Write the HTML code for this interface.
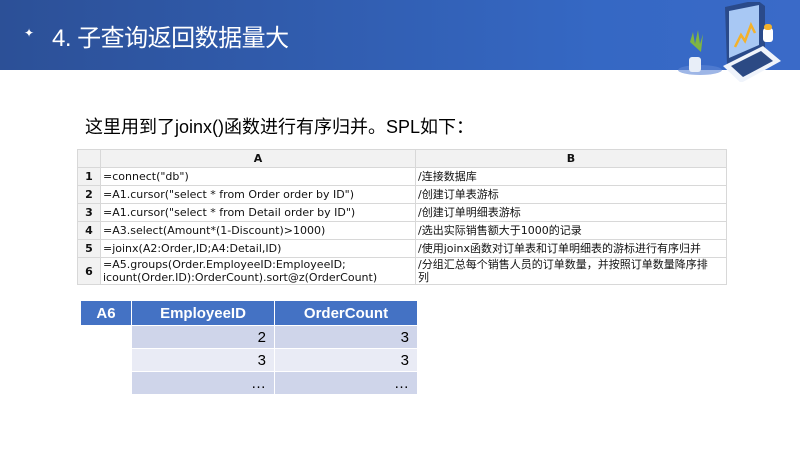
<!DOCTYPE html>
<html><head><meta charset="utf-8"><style>
body{margin:0;width:800px;height:450px;position:relative;background:#fff;font-family:"Liberation Sans","Noto Sans CJK SC",sans-serif;overflow:hidden}
.hd{position:absolute;left:0;top:0;width:800px;height:70px;background:linear-gradient(90deg,#2c5097 0%,#3568c4 75%,#3a6ac8 100%)}
.tt{position:absolute;left:52px;top:18px;color:#fff;font-size:24px;letter-spacing:-0.5px}
.star{position:absolute;left:24px;top:26px;color:#fff;font-size:12px}
.sub{position:absolute;left:85px;top:113px;font-size:18px;color:#000}
table{border-collapse:collapse;position:absolute}
.t1{left:77px;top:149px;font-size:11px;font-family:"DejaVu Sans","Noto Sans CJK SC",sans-serif}
.t1 td{border:1px solid #d8d8d8;padding:0 2px;height:17px;line-height:13px;color:#111;white-space:nowrap}
.t1 tr:first-child td{background:#f2f2f2;font-weight:bold;text-align:center}
.t1 td:first-child{background:#f2f2f2;font-weight:bold;text-align:center;width:18px}
.t2{left:80px;top:300px;font-size:15px}
.t2 td{border:1px solid #fff;height:22px;padding:0 8px}
.t2 .h td{background:#4472c4;color:#fff;font-weight:bold;text-align:center;height:24px}
.t2 .a td{background:#cfd5ea;text-align:right}
.t2 .b td{background:#e9ebf5;text-align:right}
.t2 td.e{background:#fff!important}
</style></head><body>
<div class="hd"></div>
<div class="star">✦</div>
<div class="tt">4. 子查询返回数据量大</div>
<svg style="position:absolute;left:665px;top:2px" width="120" height="80" viewBox="0 0 120 80">
<ellipse cx="35" cy="68" rx="22" ry="5" fill="#5d86d6" opacity=".6"/>
<path d="M25 40 l3-10 l2 12 l3-14 l2 14 l3-10 l-2 18z" fill="#7fb542"/>
<rect x="24" y="55" width="12" height="15" rx="3" fill="#e8eef8"/>
<path d="M60 5 l32-7 l8 6 l0 44 l-38 16z" fill="#2a4a8a"/>
<path d="M64 9 l30-6 l0 40 l-30 13z" fill="#a8c8f4"/>
<path d="M70 45 l6-12 l4 6 l6-16 l4 8" stroke="#f3b12b" stroke-width="2.5" fill="none"/>
<path d="M58 64 l40-20 l18 15 l-40 22z" fill="#f0f4fb"/>
<path d="M66 64 l30-15 l12 10 l-30 16z" fill="#2c4a84"/>
<rect x="98" y="26" width="10" height="14" rx="3" fill="#fff"/>
<rect x="99" y="22" width="8" height="6" rx="3" fill="#f3b12b"/>
</svg>
<div class="sub">这里用到了joinx()函数进行有序归并。SPL如下：</div>
<table class="t1">
<tr><td></td><td style="width:310px">A</td><td style="width:306px">B</td></tr>
<tr><td>1</td><td>=connect("db")</td><td>/连接数据库</td></tr>
<tr><td>2</td><td>=A1.cursor("select * from Order order by ID")</td><td>/创建订单表游标</td></tr>
<tr><td>3</td><td>=A1.cursor("select * from Detail order by ID")</td><td>/创建订单明细表游标</td></tr>
<tr><td>4</td><td>=A3.select(Amount*(1-Discount)&gt;1000)</td><td>/选出实际销售额大于1000的记录</td></tr>
<tr><td>5</td><td>=joinx(A2:Order,ID;A4:Detail,ID)</td><td>/使用joinx函数对订单表和订单明细表的游标进行有序归并</td></tr>
<tr><td style="height:26px">6</td><td style="font-weight:normal;text-align:left;background:#fff">=A5.groups(Order.EmployeeID:EmployeeID;<br>icount(Order.ID):OrderCount).sort@z(OrderCount)</td><td>/分组汇总每个销售人员的订单数量，并按照订单数量降序排<br>列</td></tr>
</table>
<table class="t2">
<tr class="h"><td style="width:34px">A6</td><td style="width:126px">EmployeeID</td><td style="width:126px">OrderCount</td></tr>
<tr class="a"><td class="e"></td><td>2</td><td>3</td></tr>
<tr class="b"><td class="e"></td><td>3</td><td>3</td></tr>
<tr class="a"><td class="e"></td><td>…</td><td>…</td></tr>
</table>
</body></html>
